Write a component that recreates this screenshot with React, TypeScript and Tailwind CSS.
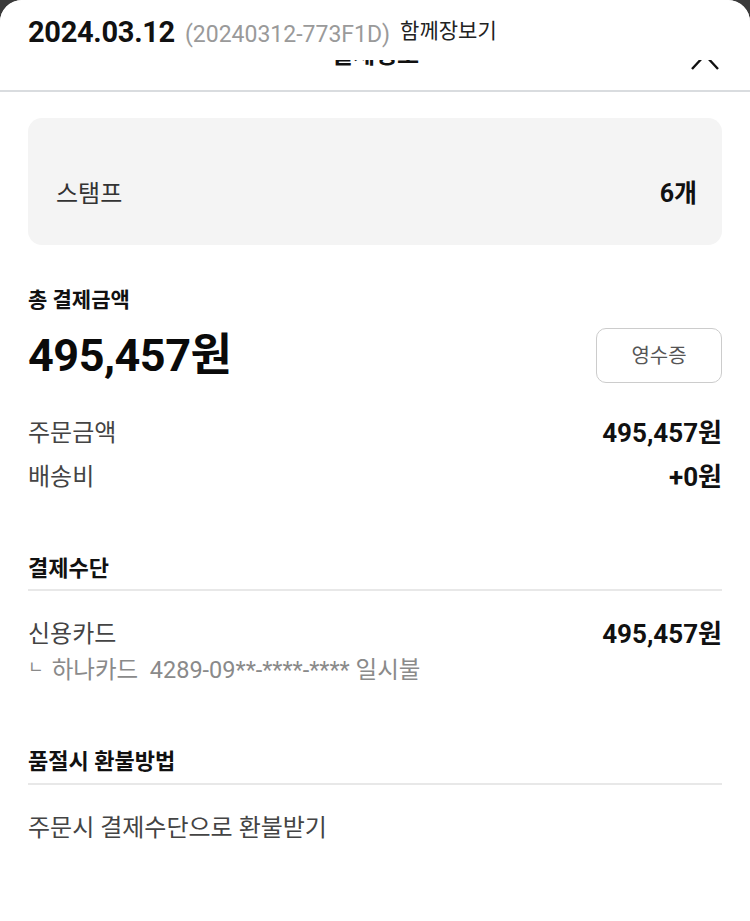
import React from 'react';

const FONT = "font-['Roboto','Noto_Sans_CJK_KR',sans-serif]";

const Row = ({ label, value }: { label: string; value: string }) => (
  <div className="flex items-center justify-between leading-[32px]">
    <span className="text-[24px] text-[#444]">{label}</span>
    <span className="text-[26px] font-bold text-[#111]">{value}</span>
  </div>
);

const SectionTitle = ({ children, pb }: { children: React.ReactNode; pb: string }) => (
  <div className={`border-b-2 border-[#e8e8e8] text-[22px] font-bold leading-[30px] text-[#111] ${pb}`}>{children}</div>
);

const App: React.FC = () => {
  return (
    <div className={`h-screen w-screen bg-[#3a3a3a] ${FONT}`}>
      <div className="flex h-full flex-col overflow-hidden rounded-t-[22px] bg-white">
        {/* header, sticky order info covers the top of it */}
        <div className="relative flex h-[92px] shrink-0 justify-center border-b-2 border-[#d9dcdf] pt-[43px]">
          <span className="text-[24px] font-bold leading-[24px] text-[#111]">결제정보</span>
          <svg className="absolute right-[30px] top-[50px]" width="30" height="22" viewBox="0 0 30 22" fill="none">
            <path d="M2 19 L15 5 L28 19" stroke="#111" strokeWidth="2.4" />
          </svg>
          <div className="absolute inset-x-0 top-0 flex h-[60px] items-baseline gap-[10px] bg-white px-[28px] pt-[15px]">
            <span className="text-[29px] font-bold leading-[34px] tracking-[-0.3px] text-[#111]">2024.03.12</span>
            <span className="text-[23px] leading-[34px] text-[#9a9a9a]">(20240312-773F1D)</span>
            <span className="-translate-y-[4px] text-[21px] leading-[34px] text-[#222]">함께장보기</span>
          </div>
        </div>

        <div className="px-[28px] pt-[26px]">
          <div className="flex items-center justify-between rounded-[14px] bg-[#f4f4f4] pb-[36px] pl-[28px] pr-[25px] pt-[61px] leading-[30px]">
            <span className="text-[24px] text-[#333]">스탬프</span>
            <span className="text-[25px] font-bold text-[#111]">6개</span>
          </div>

          <div className="mt-[40px] text-[21px] font-bold leading-[30px] text-[#111]">총 결제금액</div>
          <div className="mt-[13px] flex items-center justify-between">
            <span className="text-[45px] font-bold leading-[55px] tracking-[-0.5px] text-[#0a0a0a]">495,457원</span>
            <button className="flex h-[55px] w-[126px] items-center justify-center rounded-[10px] border border-[#cccccc] text-[20px] text-[#555]">
              영수증
            </button>
          </div>

          <div className="mt-[34px] flex flex-col gap-[12px]">
            <Row label="주문금액" value="495,457원" />
            <Row label="배송비" value="+0원" />
          </div>

          <div className="mt-[61px]">
            <SectionTitle pb="pb-[5px]">결제수단</SectionTitle>
            <div className="mt-[27px]">
              <Row label="신용카드" value="495,457원" />
            </div>
            <div className="mt-[5px] flex h-[30px] items-center text-[23.5px] leading-[30px] text-[#8a8a8a]">
              <span className="mr-[8px] -translate-y-[3px] text-[17px] leading-[30px]">ㄴ</span>
              <span>하나카드&nbsp;&nbsp;4289-09**-****-**** 일시불</span>
            </div>
          </div>

          <div className="mt-[62px]">
            <SectionTitle pb="pb-[6px]">품절시 환불방법</SectionTitle>
            <div className="mt-[27px] text-[24px] leading-[32px] text-[#444]">주문시 결제수단으로 환불받기</div>
          </div>
        </div>
      </div>
    </div>
  );
};

export default App;
